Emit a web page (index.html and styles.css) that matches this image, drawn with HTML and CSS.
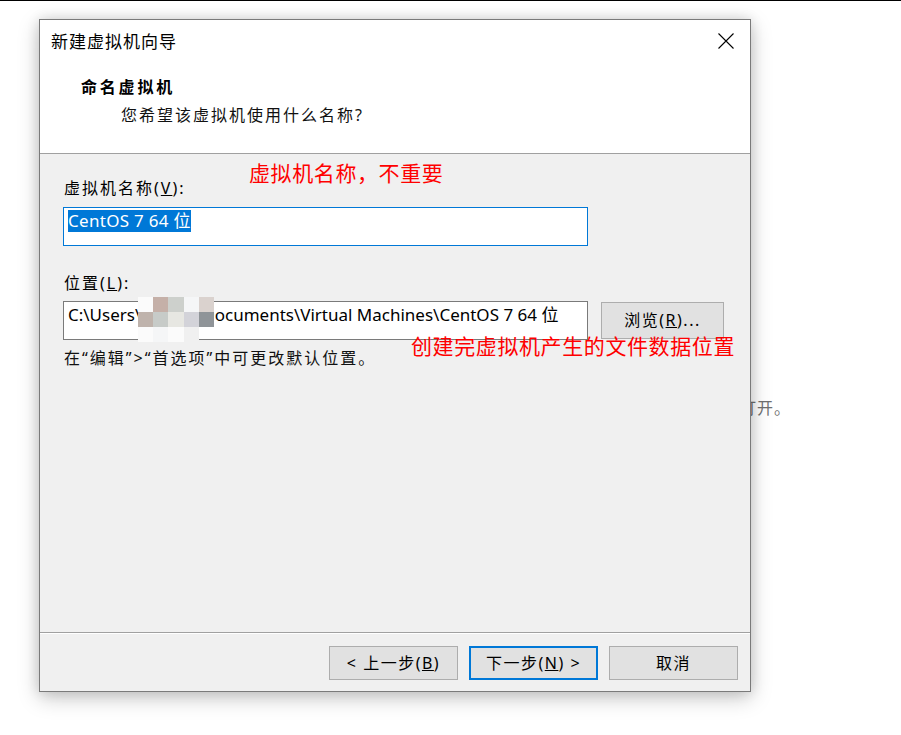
FILE: index.html
```html
<!DOCTYPE html>
<html lang="zh-CN">
<head>
<meta charset="utf-8">
<title>新建虚拟机向导</title>
<link rel="stylesheet" href="styles.css">
</head>
<body>
<div class="topline"></div>
<div class="bgtext">打开。</div>
<div class="page">
  <div class="dialog">
    <div class="header">
      <div class="titlebar">
        <span class="title">新建虚拟机向导</span>
        <svg class="close" width="16" height="16" viewBox="0 0 16 16"><path d="M0.5 0.5 L15.5 15.5 M15.5 0.5 L0.5 15.5" stroke="#000" stroke-width="1.1" fill="none"/></svg>
      </div>
      <div class="heading">命名虚拟机</div>
      <div class="subtitle">您希望该虚拟机使用什么名称?</div>
    </div>
    <div class="body">
      <div class="note note-name">虚拟机名称，不重要</div>
      <div class="label">虚拟机名称(<u>V</u>):</div>
      <div class="field focused"><span class="sel">CentOS 7 64 位</span></div>
      <div class="label label-loc">位置(<u>L</u>):</div>
      <div class="loc-row">
        <div class="field loc">C:\Users\<span class="hidden">user</span>Documents\Virtual Machines\CentOS 7 64 位<span class="mosaic"><i class="m a"></i><i class="m b"></i><i class="m c"></i><i class="m d"></i><i class="m e"></i><i class="m f"></i><i class="m g"></i><i class="m h"></i><i class="m k"></i><i class="m l"></i><i class="m a"></i><i class="m d"></i><i class="m a"></i><i class="m n"></i><i class="m o"></i></span></div>
        <button class="btn browse">浏览(<u>R</u>)...</button>
      </div>
      <div class="hint">在“编辑”&gt;“首选项”中可更改默认位置。</div>
      <div class="note note-loc">创建完虚拟机产生的文件数据位置</div>
    </div>
    <div class="footer">
      <button class="btn">&lt; 上一步(<u>B</u>)</button>
      <button class="btn primary">下一步(<u>N</u>) &gt;</button>
      <button class="btn">取消</button>
    </div>
  </div>
</div>
</body>
</html>
```
FILE: styles.css
```css
* { box-sizing: border-box; }
html, body { margin: 0; padding: 0; background: #fff; }
body {
  font-family: "Noto Sans", "Noto Sans CJK SC", sans-serif;
  font-size: 16px;
  color: #000;
  width: 901px;
  height: 735px;
  overflow: hidden;
  position: relative;
}
.topline { height: 1px; background: #000; }
.bgtext {
  position: absolute;
  left: 740px;
  top: 397px;
  font-size: 16px;
  line-height: 22px;
  letter-spacing: 1px;
  color: #707070;
}
.page { padding: 18px 0 0 39px; position: relative; }
.dialog {
  width: 712px;
  height: 673px;
  border: 1px solid #7a7a7a;
  background: #f0f0f0;
  box-shadow: 0 6px 20px rgba(0,0,0,0.22), 0 0 12px rgba(0,0,0,0.12);
  display: flex;
  flex-direction: column;
  position: relative;
}
.header {
  height: 134px;
  background: #fff;
  border-bottom: 1px solid #a0a0a0;
}
.titlebar {
  height: 44px;
  display: flex;
  align-items: center;
  justify-content: space-between;
  padding: 0 16px 0 11px;
}
.title { font-size: 17px; letter-spacing: 1px; line-height: 44px; }
.close { display: block; margin-top: -2px; }
.heading {
  margin-top: 13px;
  padding-left: 41px;
  font-weight: bold;
  font-size: 16px;
  letter-spacing: 2.8px;
  line-height: 20px;
}
.subtitle {
  margin-top: 8px;
  padding-left: 81px;
  font-size: 16px;
  letter-spacing: 2px;
  line-height: 20px;
  color: #111;
}
.body {
  height: 478px;
  padding: 24px 0 0 24px;
  position: relative;
}
.label { line-height: 20px; height: 20px; letter-spacing: 2px; margin-bottom: 9px; }
.label-loc { margin-bottom: 8px; }
.field {
  width: 525px;
  height: 39px;
  margin-left: -1px;
  border: 1px solid #7a7a7a;
  background: #fff;
  padding: 2px 4px 0;
  line-height: 22px;
  font-size: 17px;
  white-space: nowrap;
  overflow: visible;
  position: relative;
}
.field.focused { border-color: #0078d7; margin-bottom: 27px; }
.sel { background: #0078d7; color: #fff; display: inline-block; letter-spacing: 0.3px; }
.hidden { display: inline-block; width: 61px; color: transparent; }
.loc-row { display: flex; align-items: flex-start; }
.mosaic {
  position: absolute;
  left: 74px;
  top: -5px;
  width: 76px;
  height: 45px;
  display: grid;
  grid-template-columns: repeat(5, 1fr);
  grid-template-rows: repeat(3, 1fr);
}
.m { display: block; }
.m.a { background: #fbfbfb; }
.m.b { background: #c5b0a8; }
.m.c { background: #cdd0cc; }
.m.d { background: #f5f6f7; }
.m.e { background: #dad2ce; }
.m.f { background: #bfb3ac; }
.m.g { background: #c7cbc8; }
.m.h { background: #e7e7e2; }
.m.k { background: #d3d3d9; }
.m.l { background: #8f9498; }
.m.n { background: #f0f0f0; }
.m.o { background: transparent; }
.btn {
  font-family: "Noto Sans", "Noto Sans CJK SC", sans-serif;
  font-size: 16px;
  color: #000;
  background: #e1e1e1;
  border: 1px solid #adadad;
  padding: 0 0 3px;
  margin: 0;
  letter-spacing: 1.5px;
}
.browse {
  width: 123px;
  height: 37px;
  margin: 1px 0 0 13px;
}
.hint { margin-top: 8px; line-height: 20px; letter-spacing: 2px; color: #111; }
.note {
  position: absolute;
  color: #ff0000;
  font-size: 21px;
  letter-spacing: 0.6px;
  line-height: 28px;
  white-space: nowrap;
}
.note-name { left: 209px; top: 5px; }
.note-loc { left: 371px; top: 178px; }
.footer {
  height: 59px;
  border-top: 1px solid #a0a0a0;
  box-shadow: inset 0 1px 0 #fff;
  display: flex;
  justify-content: flex-end;
  gap: 11px;
  padding: 13px 12px 0 0;
}
.footer .btn { width: 129px; height: 34px; }
.footer .btn.primary { border: 2px solid #0078d7; }
```
